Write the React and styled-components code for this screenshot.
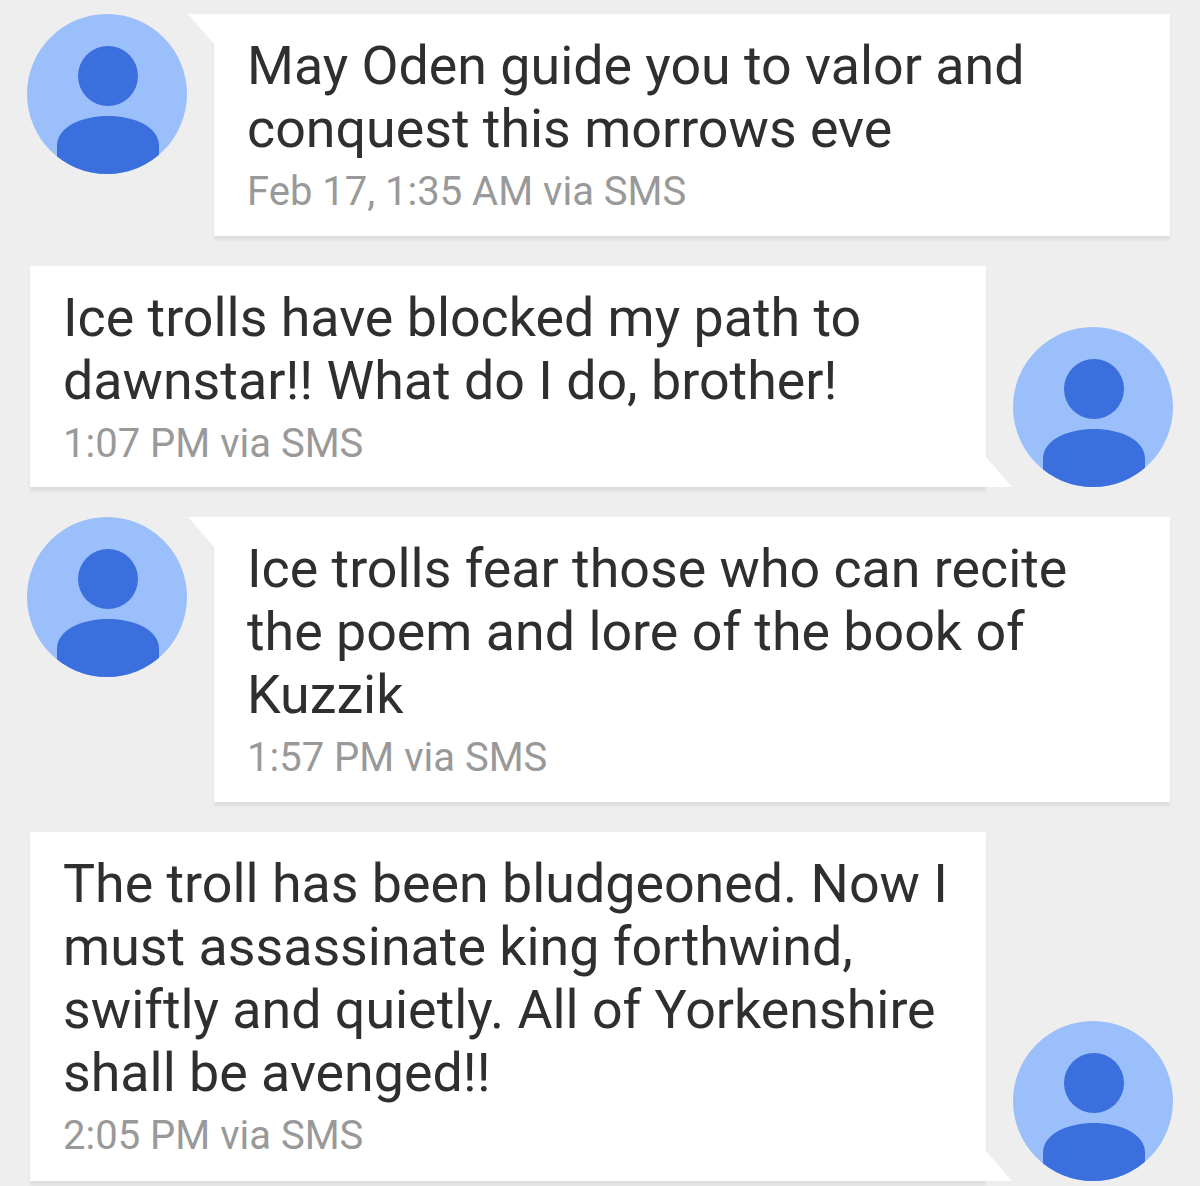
import React from 'react';
import styled, { createGlobalStyle } from 'styled-components';

const GlobalStyle = createGlobalStyle`
  html, body {
    margin: 0;
    padding: 0;
    background: #eeeeee;
  }
`;

const Thread = styled.div`
  display: flex;
  flex-direction: column;
  gap: 30px;
  width: 1200px;
  height: 1186px;
  box-sizing: border-box;
  padding-top: 14px;
  overflow: hidden;
  background: #eeeeee;
  font-family: Roboto, "Liberation Sans", sans-serif;
`;

const Row = styled.div`
  display: flex;
  flex-direction: ${props => (props.$mine ? 'row' : 'row-reverse')};
  justify-content: flex-end;
  align-items: ${props => (props.$mine ? 'flex-end' : 'flex-start')};
  gap: 27px;
  padding: ${props => (props.$mine ? '0 27px 0 30px' : '0 30px 0 27px')};
`;

const Bubble = styled.div`
  position: relative;
  box-sizing: border-box;
  width: 956px;
  min-height: ${props => props.$height}px;
  padding: 20px 20px 0 34px;
  background: #ffffff;
  box-shadow: 0 4px 3px rgba(0, 0, 0, 0.07);

  &::after {
    content: '';
    position: absolute;
    width: 26px;
    height: 30px;
    background: #ffffff;
    ${props =>
      props.$mine
        ? `
      right: -26px;
      bottom: 0;
      clip-path: polygon(0 0, 100% 100%, 0 100%);
    `
        : `
      left: -26px;
      top: 0;
      clip-path: polygon(0 0, 100% 0, 100% 100%);
    `}
  }
`;

const Message = styled.p`
  margin: 0;
  margin-left: -1px;
  font-size: 53.75px;
  line-height: 63px;
  color: #2f2f2f;
`;

const Meta = styled.div`
  margin-top: 10px;
  margin-left: -1px;
  font-size: 40px;
  line-height: 44px;
  color: #999999;
`;

const AvatarSvg = styled.svg`
  display: block;
  flex: none;
  width: 160px;
  height: 160px;
`;

const Avatar = ({ id }) => (
  <AvatarSvg viewBox="0 0 160 160">
    <defs>
      <clipPath id={id}>
        <circle cx="80" cy="80" r="80" />
      </clipPath>
    </defs>
    <circle cx="80" cy="80" r="80" fill="#9abffa" />
    <circle cx="81" cy="62" r="30" fill="#3a6fdd" />
    <g clipPath={`url(#${id})`}>
      <path
        d="M30 170 L30 132 C30 112 56 102 81 102 C106 102 132 112 132 132 L132 170 Z"
        fill="#3a6fdd"
      />
    </g>
  </AvatarSvg>
);

const messages = [
  {
    id: 'a',
    mine: false,
    height: 222,
    lines: ['May Oden guide you to valor and', 'conquest this morrows eve'],
    meta: 'Feb 17, 1:35 AM via SMS',
  },
  {
    id: 'b',
    mine: true,
    height: 221,
    lines: ['Ice trolls have blocked my path to', 'dawnstar!! What do I do, brother!'],
    meta: '1:07 PM via SMS',
  },
  {
    id: 'c',
    mine: false,
    height: 285,
    lines: ['Ice trolls fear those who can recite', 'the poem and lore of the book of', 'Kuzzik'],
    meta: '1:57 PM via SMS',
  },
  {
    id: 'd',
    mine: true,
    height: 349,
    lines: [
      'The troll has been bludgeoned. Now I',
      'must assassinate king forthwind,',
      'swiftly and quietly. All of Yorkenshire',
      'shall be avenged!!',
    ],
    meta: '2:05 PM via SMS',
  },
];

export default function App() {
  return (
    <>
      <GlobalStyle />
      <Thread>
        {messages.map(item => (
          <Row key={item.id} $mine={item.mine}>
            <Bubble $mine={item.mine} $height={item.height}>
              <Message>
                {item.lines.map(line => (
                  <React.Fragment key={line}>
                    {line}
                    <br />
                  </React.Fragment>
                ))}
              </Message>
              <Meta>{item.meta}</Meta>
            </Bubble>
            <Avatar id={`avatar-${item.id}`} />
          </Row>
        ))}
      </Thread>
    </>
  );
}
